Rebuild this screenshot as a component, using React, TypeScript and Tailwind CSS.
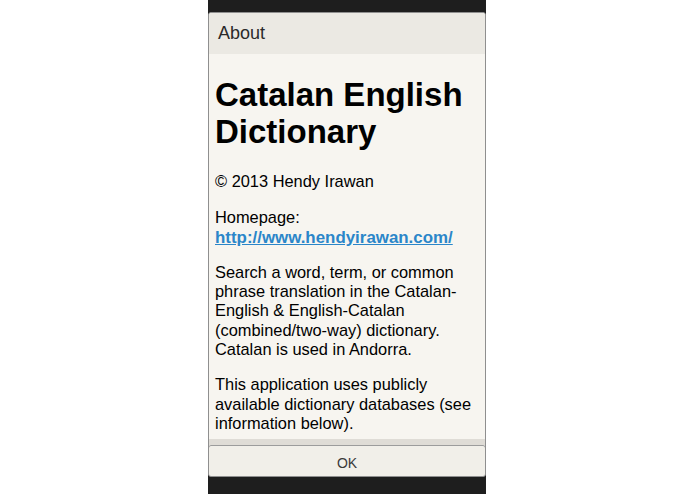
export default function App() {
  return (
    <div className="w-[695px] h-[494px] bg-white flex pl-[208px]" style={{ fontFamily: '"Liberation Sans", Arial, sans-serif' }}>
      <div className="w-[278px] h-[494px] bg-[#1e1e1e] flex flex-col pt-[12px] pb-[17px]">
        <div className="flex-1 flex flex-col rounded-[3px] border border-[#8f8f8f] bg-[#f7f5f0] overflow-hidden">
          <div className="h-[41px] shrink-0 bg-[#ebe9e3] flex items-center pl-[9px] text-[18px] text-[#2a2a2a]">About</div>
          <div className="flex-1 overflow-hidden px-[6px] text-[16.4px] leading-[19.3px] text-black">
            <h1 className="mt-[22px] text-[33px] leading-[37px] font-bold">Catalan English Dictionary</h1>
            <p className="mt-[22px]">© 2013 Hendy Irawan</p>
            <p className="mt-[17px]">
              Homepage:
              <br />
              <a className="font-bold text-[16.9px] text-[#2b86c9] underline">http://www.hendyirawan.com/</a>
            </p>
            <p className="mt-[16px]">
              Search a word, term, or common phrase translation in the Catalan-English &amp; English-Catalan (combined/two-way) dictionary. Catalan is used in Andorra.
            </p>
            <p className="mt-[16px]">
              This application uses publicly available dictionary databases (see information below).
            </p>
          </div>
          <div className="shrink-0 h-[6px] bg-[#dfdcd6]" />
          <div className="shrink-0 h-[32px] rounded-[3px] border border-[#9c9c9c] bg-[#f1efe9] flex items-center justify-center pt-[4px] text-[14px] text-[#3a3a3a] mx-[-1px] mb-[-1px]">OK</div>
        </div>
      </div>
    </div>
  );
}
